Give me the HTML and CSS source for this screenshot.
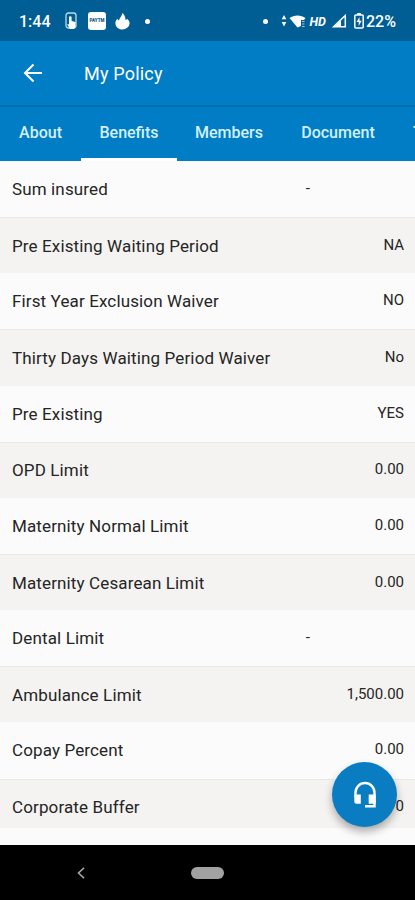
FILE: index.html
```html
<!DOCTYPE html>
<html lang="en">
<head>
  <meta charset="UTF-8">
  <meta name="viewport" content="width=device-width, initial-scale=1.0">
  <title>My Policy</title>
  <link rel="stylesheet" href="styles.css">
</head>
<body>
  <div class="screen">
    <!-- status bar -->
    <div class="status-bar">
      <span class="clock">1:44</span>
      <svg class="touch-icon" width="12" height="18" viewBox="0 0 12 18">
        <rect x="1" y="1" width="10" height="15" rx="2.5" fill="none" stroke="#b9dcec" stroke-width="1.3"/>
        <path d="M4 5.5a1.3 1.3 0 0 1 2.6 0V9l3.900 1v4.5L9 17H5l-3-5 2 .5z" fill="#fff"/>
      </svg>
      <span class="app-badge">PAYTM</span>
      <svg class="flame-icon" width="15" height="17" viewBox="0 0 15 17">
        <path d="M7.400 0C7 3 4.800 4.200 4 7.500L2.200 6C1 7.300.4 8.600.4 10.200c0 3.700 3.200 6.300 7 6.300s7.200-2.700 7.200-6.400c0-1.700-.8-3-2.200-4.200L10.500 7C10.500 4 9.300 1.500 7.400 0z" fill="#fff"/>
      </svg>
      <span class="dot"></span>

      <div class="status-right">
        <span class="dot"></span>
        <svg class="wifi-icon" width="25" height="15" viewBox="0 0 25 15">
          <path d="M3 1l2.300 4.200H.7zM3 12.500L.7 8h4.600z" fill="#fff"/>
          <path d="M8.500 4c4.500-3.500 11.500-3.500 16 0L23 6h-3v6l-3.500 1.500z" fill="#fff"/>
          <path d="M21 7.500h2.500M21 10h2.500M21 12.500h2.500" stroke="#9fcbe2" stroke-width="1.200"/>
        </svg>
        <span class="hd">HD</span>
        <svg class="signal-icon" width="15" height="14" viewBox="0 0 15 14">
          <path d="M1.500 12.800L13.300 1.500v11.300z" fill="none" stroke="#fff" stroke-width="1.500"/>
          <path d="M2 13l7-6.500V13z" fill="#fff"/>
        </svg>
        <svg class="battery-icon" width="10" height="16" viewBox="0 0 10 16">
          <path d="M3.200 0h3.600v2H3.200z" fill="#fff"/>
          <rect x=".8" y="2" width="8.400" height="13" rx="1" fill="none" stroke="#fff" stroke-width="1.500"/>
          <path d="M5.500 4L2.500 9h2.200v4l3-5.200H5.500z" fill="#fff"/>
        </svg>
        <span class="percent">22%</span>
      </div>
    </div>

    <!-- title bar -->
    <header class="app-bar">
      <svg class="back-icon" width="20" height="20" viewBox="0 0 20 20">
        <path d="M10.500 1.500L2 10l8.500 8.500M2 10h17" fill="none" stroke="#fff" stroke-width="2"/>
      </svg>
      <h1>My Policy</h1>
    </header>

    <!-- tabs -->
    <nav class="tabs">
      <a class="tab about">About</a>
      <a class="tab benefits active">Benefits</a>
      <a class="tab members">Members</a>
      <a class="tab document">Document</a>
      <a class="tab tpa">T</a>
    </nav>

    <!-- benefits list -->
    <main class="list">
      <div class="row"><span class="label">Sum insured</span><span class="value empty">-</span></div>
      <div class="row"><span class="label">Pre Existing Waiting Period</span><span class="value">NA</span></div>
      <div class="row"><span class="label">First Year Exclusion Waiver</span><span class="value">NO</span></div>
      <div class="row"><span class="label">Thirty Days Waiting Period Waiver</span><span class="value">No</span></div>
      <div class="row"><span class="label">Pre Existing</span><span class="value">YES</span></div>
      <div class="row"><span class="label">OPD Limit</span><span class="value">0.00</span></div>
      <div class="row"><span class="label">Maternity Normal Limit</span><span class="value">0.00</span></div>
      <div class="row"><span class="label">Maternity Cesarean Limit</span><span class="value">0.00</span></div>
      <div class="row"><span class="label">Dental Limit</span><span class="value empty">-</span></div>
      <div class="row"><span class="label">Ambulance Limit</span><span class="value">1,500.00</span></div>
      <div class="row"><span class="label">Copay Percent</span><span class="value">0.00</span></div>
      <div class="row last"><span class="label">Corporate Buffer</span><span class="value">0</span></div>
    </main>

    <button class="support-btn" aria-label="Support">
      <svg width="24" height="28" viewBox="0 0 24 28">
        <path d="M2.500 16v-4.500a9.500 9.500 0 0 1 19 0V25.300H12" fill="none" stroke="#fff" stroke-width="2.400"/>
        <path d="M1.300 13.500h6.500v9.300H3.800a2.500 2.500 0 0 1-2.500-2.500zM15.700 13.500h7v9.300h-7z" fill="#fff"/>
      </svg>
    </button>

    <!-- android navigation -->
    <div class="nav-bar">
      <svg class="nav-back" width="8" height="12" viewBox="0 0 8 12">
        <path d="M7 .8L1.500 6 7 11.200" fill="none" stroke="#a5a5a5" stroke-width="1.600"/>
      </svg>
      <span class="home-pill"></span>
    </div>
  </div>
</body>
</html>
```
FILE: styles.css
```css
* {
  box-sizing: border-box;
}

body {
  margin: 0;
  font-family: Roboto, "Liberation Sans", sans-serif;
  background: #fbfbfb;
}

.screen {
  position: relative;
  display: flex;
  flex-direction: column;
  width: 415px;
  height: 900px;
  overflow: hidden;
}

/* status bar */
.status-bar {
  display: flex;
  align-items: center;
  height: 41px;
  padding: 1px 18px 0 19px;
  background: #005e94;
  color: #fff;
  flex-shrink: 0;
}

.clock {
  width: 46px;
  font-size: 16px;
  font-weight: 500;
}

.app-badge {
  width: 18px;
  height: 18px;
  margin: 0 9px 0 11px;
  border-radius: 3px;
  background: #fff;
  color: #24597c;
  font-size: 4.5px;
  font-weight: 900;
  line-height: 18px;
  text-align: center;
}

.dot {
  width: 5px;
  height: 5px;
  border-radius: 50%;
  background: #fff;
}

.flame-icon {
  margin-right: 15px;
}

.status-right {
  display: flex;
  align-items: center;
  margin-left: auto;
}

.wifi-icon {
  margin-left: 13px;
}

.hd {
  margin-left: 4px;
  font-size: 12.5px;
  font-weight: 700;
  font-style: italic;
}

.signal-icon {
  margin-left: 6px;
}

.battery-icon {
  margin: 0 2px 0 7px;
}

.percent {
  width: 31px;
  font-size: 16px;
  font-weight: 500;
}

/* title bar */
.app-bar {
  display: flex;
  align-items: center;
  height: 66px;
  padding: 0 23px;
  background: #007dc4;
  border-bottom: 2px solid #006fae;
  color: #fff;
  flex-shrink: 0;
}

.app-bar h1 {
  margin: 0 0 0 41px;
  font-size: 18px;
  font-weight: 400;
  letter-spacing: 0.2px;
}

/* tabs */
.tabs {
  display: flex;
  height: 54px;
  background: #007dc4;
  color: #d3f1fb;
  font-size: 16px;
  font-weight: 500;
  overflow: hidden;
  flex-shrink: 0;
}

.tab {
  flex-shrink: 0;
  line-height: 51px;
  text-align: center;
}

.tab.active {
  border-bottom: 3px solid #fff;
}

.about {
  width: 81px;
}

.benefits {
  width: 96px;
}

.members {
  width: 104px;
}

.document {
  width: 114px;
}

.tpa {
  padding-left: 18px;
}

/* list */
.list {
  flex: 1;
  background: #fbfbfb;
}

.row {
  display: flex;
  justify-content: space-between;
  align-items: center;
  height: 56.15px;
  padding: 0 11px 0 12px;
  background: #fbfbfb;
  color: #252525;
}

.row:nth-child(even) {
  background: #f4f3f1;
  border-top: 1px solid #e9e9e6;
}

.row.last {
  height: 49px;
  align-items: flex-start;
  padding-top: 17px;
}

.label {
  font-size: 17px;
  letter-spacing: 0.13px;
}

.value {
  padding-bottom: 2px;
  font-size: 15px;
}

.value.empty {
  margin-right: 94px;
}

.support-btn {
  position: absolute;
  right: 18px;
  bottom: 73px;
  display: flex;
  justify-content: center;
  align-items: center;
  width: 65px;
  height: 65px;
  padding: 0;
  border: none;
  border-radius: 50%;
  background: #0a7dc2;
  box-shadow: 0 5px 9px rgba(0, 0, 0, 0.3);
}

/* android navigation */
.nav-bar {
  display: flex;
  align-items: center;
  height: 55px;
  padding-left: 77px;
  background: #000;
  flex-shrink: 0;
}

.home-pill {
  width: 33px;
  height: 12px;
  margin-left: 106px;
  border-radius: 6px;
  background: #a2a2a2;
}
```
